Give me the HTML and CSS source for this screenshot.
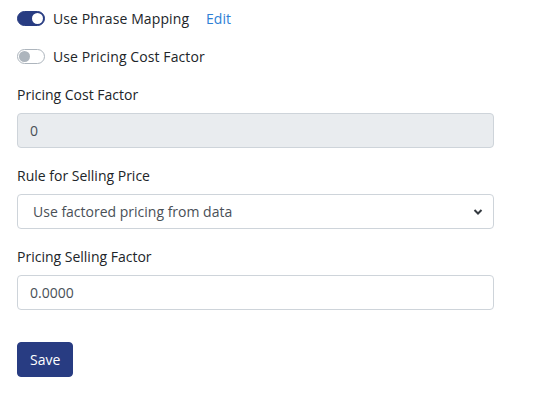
FILE: index.html
```html
<!DOCTYPE html>
<html>
<head>
<meta charset="utf-8">
<link rel="stylesheet" href="styles.css">
</head>
<body>
<form class="page">
  <div class="switch-row">
    <span class="switch on"><span class="knob"></span></span>
    <span class="switch-label">Use Phrase Mapping</span>
    <a class="edit" href="#">Edit</a>
  </div>
  <div class="switch-row">
    <span class="switch off"><span class="knob"></span></span>
    <span class="switch-label">Use Pricing Cost Factor</span>
  </div>
  <div class="group">
    <label class="label">Pricing Cost Factor</label>
    <div class="control disabled">0</div>
  </div>
  <div class="group">
    <label class="label">Rule for Selling Price</label>
    <div class="control select">
      <span class="select-text">Use factored pricing from data</span>
      <svg class="chevron" width="10" height="8" viewBox="0 0 10 8"><path d="M1.5 2 L5 5.5 L8.5 2" fill="none" stroke="#343a40" stroke-width="2"/></svg>
    </div>
  </div>
  <div class="group">
    <label class="label">Pricing Selling Factor</label>
    <div class="control">0.0000</div>
  </div>
  <div class="actions">
    <button type="button" class="btn">Save</button>
  </div>
</form>
</body>
</html>
```
FILE: styles.css
```css
html, body {
  margin: 0;
  padding: 0;
  background: #ffffff;
}
body {
  font-family: "Open Sans", "Noto Sans", sans-serif;
  font-size: 14px;
  color: #212529;
  line-height: 21px;
}
.page {
  padding: 8px 46px 0 17px;
  width: 477px;
}
.switch-row {
  display: flex;
  align-items: center;
  height: 21px;
  margin-bottom: 17px;
}
.switch {
  position: relative;
  box-sizing: border-box;
  width: 28px;
  height: 15px;
  border-radius: 8px;
  margin-right: 8px;
}
.switch.on {
  background: #283c82;
  border: 1px solid #283c82;
}
.switch.off {
  background: #ffffff;
  border: 1px solid #adb5bd;
}
.knob {
  position: absolute;
  top: 1px;
  width: 11px;
  height: 11px;
  border-radius: 50%;
}
.switch.on .knob {
  right: 1px;
  background: #ffffff;
}
.switch.off .knob {
  left: 1px;
  background: #adb5bd;
}
.switch-label {
  letter-spacing: 0.1px;
}
.edit {
  margin-left: 17px;
  color: #2f7fd6;
  text-decoration: none;
}
.group {
  margin-bottom: 17px;
}
.label {
  display: block;
  margin-bottom: 8px;
}
.control {
  box-sizing: border-box;
  height: 35px;
  border: 1px solid #ced4da;
  border-radius: 4px;
  padding: 6px 12px;
  background: #ffffff;
  color: #495057;
}
.control.disabled {
  background: #e9ecef;
}
.control.select {
  display: flex;
  align-items: center;
  justify-content: space-between;
  padding-left: 15px;
  padding-right: 10px;
}
.chevron {
  display: block;
}
.actions {
  padding-top: 15px;
}
.btn {
  font-family: inherit;
  font-size: 14px;
  line-height: 21px;
  color: #ffffff;
  background: #283c82;
  border: 1px solid #283c82;
  border-radius: 4px;
  padding: 6px 12px;
  height: 35px;
}
```
